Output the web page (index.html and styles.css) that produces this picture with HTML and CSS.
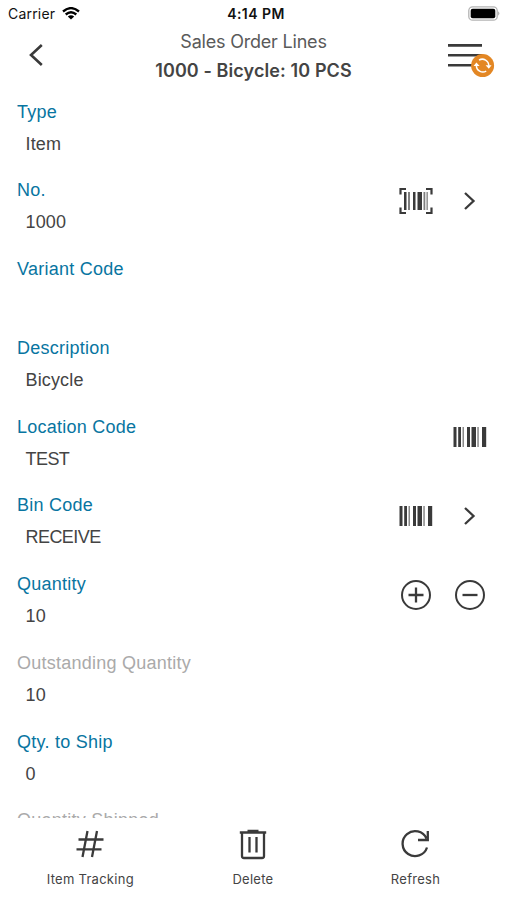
FILE: index.html
```html
<!DOCTYPE html>
<html lang="en">
<head>
<meta charset="utf-8">
<title>Sales Order Lines</title>
<link rel="stylesheet" href="styles.css">
</head>
<body>
<svg class="defs" aria-hidden="true">
  <symbol id="barcode" viewBox="0 0 34 22">
    <path d="M.5 1h3v20h-3zM5.200 1h2.800v20H5.200zM14 1h3v20h-3zM18.500 1h4.500v20h-4.500zM29 1h4.200v20H29z"/>
    <path opacity=".6" d="M9.500 1h1.500v20h-1.500zM24.300 1h1.500v20h-1.500z"/>
  </symbol>
  <symbol id="next" viewBox="0 0 12 20"><path class="line" d="M1 2 9.500 10 1 18"/></symbol>
</svg>
<div class="screen">
  <div class="status">
    <div class="carrier"><span>Carrier</span>
      <svg width="18" height="13" viewBox="0 0 18 13"><path d="M1 4.500Q9-2.300 17 4.500M3.700 7.500Q9 3 14.300 7.500" fill="none" stroke="#000" stroke-width="2.300"/><path d="M5.800 9.400Q9 6.900 12.200 9.400L9 12.500z"/></svg>
    </div>
    <div class="time">4:14 PM</div>
    <svg class="battery" width="33" height="15" viewBox="0 0 33 15"><rect x="1.800" y=".8" width="28.400" height="13.400" rx="3.800" fill="none" stroke="#b4b4b4" stroke-width="1.300"/><rect x="3.700" y="2.700" width="24.600" height="9.600" rx="2" fill="#000"/><path d="M31.300 5.300q2 2.200 0 4.400z" fill="#999"/></svg>
  </div>
  <header class="header">
    <svg class="back" width="16" height="24" viewBox="0 0 16 24"><path class="line back-line" d="M13.800 2 3 12 13.800 22"/></svg>
    <div class="titles"><div class="title">Sales Order Lines</div><div class="subtitle">1000 - Bicycle: 10 PCS</div></div>
    <svg class="menu" width="48" height="36" viewBox="0 0 48 36"><path class="line menu-line" d="M1 3.400h34M1 13.300h34M1 23.200h34"/><circle cx="35.600" cy="23.600" r="11.500" fill="#e38724"/><g fill="none" stroke="#fff" stroke-width="1.500"><path d="M32 18.100a6.500 6.500 0 0 1 9.800 5.700M39.200 29.100a6.500 6.500 0 0 1-9.800-5.700"/></g><path d="M38.600 23.200h6l-2.800 3.600zM26.600 24h6l-3.200-3.600z" fill="#fff"/></svg>
  </header>
  <main class="fields">
    <section class="field"><div class="text"><div class="label">Type</div><div class="value">Item</div></div></section>
    <section class="field"><div class="text"><div class="label">No.</div><div class="value">1000</div></div>
      <div class="action"><svg width="34" height="28" viewBox="0 0 34 28"><path d="M1.500 7.500V2H7M27 2h5.500v5.500M32.500 20.500V26H27M7 26H1.500v-5.500" fill="none" stroke="#3a3a3a" stroke-width="2.200"/><path d="M5 5h2.500v18H5zM14 5h2.500v18H14zM18.500 5h4.500v18h-4.500z"/><path opacity=".65" d="M9 5h2v18H9zM24.500 5h1.800v18h-1.800zM27.500 5h1.300v18h-1.300z"/></svg></div>
      <div class="action"><svg width="12" height="20"><use href="#next"/></svg></div></section>
    <section class="field"><div class="text"><div class="label">Variant Code</div></div></section>
    <section class="field"><div class="text"><div class="label">Description</div><div class="value">Bicycle</div></div></section>
    <section class="field"><div class="text"><div class="label">Location Code</div><div class="value caps">TEST</div></div>
      <div class="action"><svg width="34" height="22"><use href="#barcode"/></svg></div></section>
    <section class="field"><div class="text"><div class="label">Bin Code</div><div class="value caps">RECEIVE</div></div>
      <div class="action"><svg width="34" height="22"><use href="#barcode"/></svg></div>
      <div class="action"><svg width="12" height="20"><use href="#next"/></svg></div></section>
    <section class="field"><div class="text"><div class="label">Quantity</div><div class="value">10</div></div>
      <div class="action"><svg width="32" height="32" viewBox="0 0 32 32"><circle class="line round" cx="16" cy="16" r="14"/><path class="line" d="M8.500 16h15M16 8.500v15"/></svg></div>
      <div class="action"><svg width="32" height="32" viewBox="0 0 32 32"><circle class="line round" cx="16" cy="16" r="14"/><path class="line" d="M8.500 16h15"/></svg></div></section>
    <section class="field"><div class="text"><div class="label muted">Outstanding Quantity</div><div class="value">10</div></div></section>
    <section class="field"><div class="text"><div class="label">Qty. to Ship</div><div class="value">0</div></div></section>
    <section class="field"><div class="text"><div class="label muted">Quantity Shipped</div></div></section>
  </main>
  <footer class="toolbar">
    <div class="tool"><svg width="30" height="30" viewBox="0 0 30 30"><path class="line" d="M12.500 2 7.500 28M22 2l-5 26M3.500 10.500h25M1.500 20.300h25"/></svg><span>Item Tracking</span></div>
    <div class="tool"><svg width="30" height="32" viewBox="0 0 30 32"><path class="line" d="M1.800 3.500h26.400M9.500 1.800h11M4 4v23q0 2 2 2h18q2 0 2-2V4M11.500 8v15.500M18.500 8v15.500"/></svg><span>Delete</span></div>
    <div class="tool"><svg width="30" height="30" viewBox="0 0 30 30"><path class="line" d="M27 18.500A12.500 12.500 0 1 1 26.500 9.500M27.800 2v9H18"/></svg><span>Refresh</span></div>
  </footer>
</div>
</body>
</html>
```
FILE: styles.css
```css
* { box-sizing: border-box; }
body { margin: 0; background: #fff; color: #444; font-family: Inter, sans-serif; }
svg { display: block; fill: #3a3a3a; }
.defs { display: none; }
.line { fill: none; stroke: #3a3a3a; stroke-width: 2.3; }
.round { stroke-width: 2; }
.back-line { stroke-width: 2.6; }
.menu-line { stroke-width: 2.6; }
.screen { width: 507px; height: 900px; display: flex; flex-direction: column; overflow: hidden; }
.status { height: 28px; flex: none; display: grid; grid-template-columns: 1fr auto 1fr; align-items: center; padding: 0 7px 2px 8px; color: #111; font-size: 14px; }
.carrier { display: flex; align-items: center; gap: 7px; letter-spacing: 0.2px; }
.carrier svg { fill: #000; }
.time { font-weight: 600; letter-spacing: 0.45px; padding-left: 4px; }
.battery { justify-self: end; }
.header { height: 67px; flex: none; display: grid; grid-template-columns: 60px 1fr 60px; }
.back { margin: 15px 0 0 28px; }
.titles { text-align: center; padding-top: 2px; }
.title { font-size: 18px; line-height: 24px; color: #5a5a5a; letter-spacing: -0.2px; }
.subtitle { font-size: 18px; line-height: 24px; font-weight: 600; margin-top: 5px; letter-spacing: 0.1px; }
.menu { margin: 14px 0 0 0; }
.fields { flex: 1; min-height: 0; overflow: hidden; }
.field { height: 78.75px; display: flex; padding: 5.6px 10.5px 0 17px; font: 18px/22px "Liberation Sans", sans-serif; }
.text { flex: 1; }
.label { color: #0875a1; letter-spacing: 0.25px; }
.muted { color: #aaa; }
.value { margin: 10px 0 0 8.5px; letter-spacing: 0.15px; }
.caps { letter-spacing: -0.55px; }
.action { width: 54px; height: 43px; display: flex; align-items: center; justify-content: center; }
.toolbar { height: 82px; flex: none; display: grid; grid-template-columns: repeat(3, 162.6px); padding-left: 9px; }
.tool { display: flex; flex-direction: column; align-items: center; justify-content: space-between; padding: 11px 0 12px; font-size: 13px; line-height: 18px; letter-spacing: 0.27px; }
```
